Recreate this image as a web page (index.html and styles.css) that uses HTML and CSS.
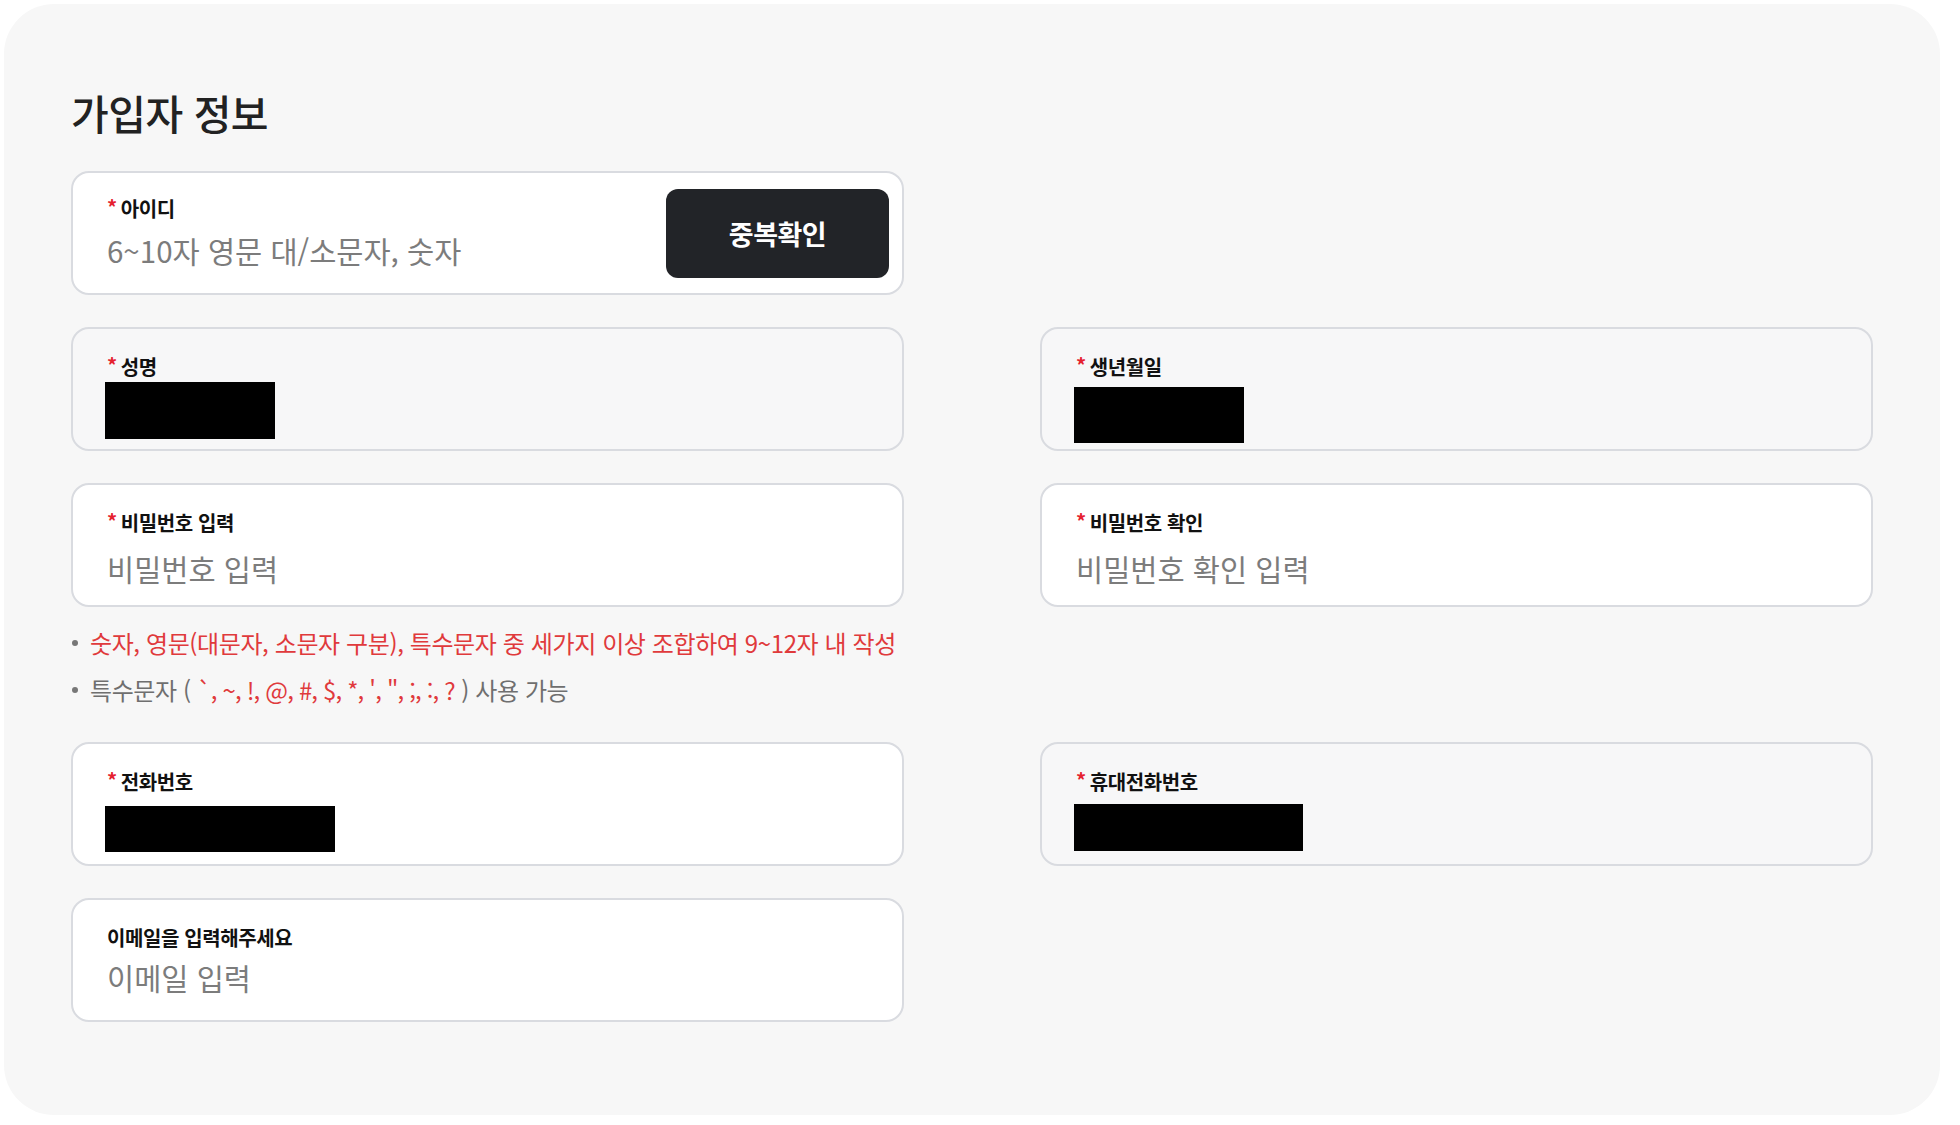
FILE: index.html
```html
<!DOCTYPE html>
<html lang="ko">
<head>
<meta charset="utf-8">
<title>가입자 정보</title>
<link rel="stylesheet" href="styles.css">
</head>
<body>
<main class="panel">
  <h1 class="title">가입자 정보</h1>
  <div class="form">
    <div class="row">
      <div class="field field-white field-id">
        <div class="field-main">
          <label class="label"><span class="req">*</span>아이디</label>
          <div class="placeholder">6~10자 영문 대/소문자, 숫자</div>
        </div>
        <button class="btn-dark" type="button">중복확인</button>
      </div>
    </div>

    <div class="row">
      <div class="field field-gray">
        <label class="label"><span class="req">*</span>성명</label>
        <div class="redact redact-name"></div>
      </div>
      <div class="field field-gray">
        <label class="label"><span class="req">*</span>생년월일</label>
        <div class="redact redact-birth"></div>
      </div>
    </div>

    <div class="group">
      <div class="row">
        <div class="field field-white">
          <label class="label"><span class="req">*</span>비밀번호 입력</label>
          <div class="placeholder placeholder-low">비밀번호 입력</div>
        </div>
        <div class="field field-white">
          <label class="label"><span class="req">*</span>비밀번호 확인</label>
          <div class="placeholder placeholder-low">비밀번호 확인 입력</div>
        </div>
      </div>
      <ul class="hints">
        <li class="hint hint-red">숫자, 영문(대문자, 소문자 구분), 특수문자 중 세가지 이상 조합하여 9~12자 내 작성</li>
        <li class="hint">특수문자 ( <span class="sym">`, ~, !, @, #, $, *, ', ", ;, :, ?</span> ) 사용 가능</li>
      </ul>
    </div>

    <div class="row">
      <div class="field field-white">
        <label class="label"><span class="req">*</span>전화번호</label>
        <div class="redact redact-tel"></div>
      </div>
      <div class="field field-gray">
        <label class="label"><span class="req">*</span>휴대전화번호</label>
        <div class="redact redact-mobile"></div>
      </div>
    </div>

    <div class="row">
      <div class="field field-white">
        <label class="label">이메일을 입력해주세요</label>
        <div class="placeholder placeholder-email">이메일 입력</div>
      </div>
    </div>
  </div>
</main>
</body>
</html>
```

FILE: styles.css
```css
* { box-sizing: border-box; }

html, body {
  margin: 0;
  padding: 0;
  background: #ffffff;
}

body {
  font-family: "Noto Sans CJK KR", "Noto Sans", sans-serif;
  color: #1d1d1f;
}

.panel {
  margin: 4px;
  width: 1936px;
  height: 1111px;
  background: #f7f7f7;
  border-radius: 50px;
  padding: 83px 0 0 67px;
}

.title {
  margin: 0 0 34px 0;
  font-size: 41px;
  line-height: 50px;
  font-weight: 500;
  color: #222222;
  letter-spacing: -0.5px;
}

.form {
  display: flex;
  flex-direction: column;
  gap: 32px;
}

.row {
  display: flex;
  gap: 136px;
}

.group {
  display: flex;
  flex-direction: column;
}

.field {
  width: 833px;
  height: 124px;
  border: 2px solid #d9dbe0;
  border-radius: 18px;
  padding: 25px 34px 0 34px;
  display: flex;
  flex-direction: column;
}

.field-white { background: #ffffff; }
.field-gray { background: #f7f7f8; }

.field-id {
  flex-direction: row;
  align-items: center;
  padding: 0 13px 0 34px;
}

.field-main {
  flex: 1;
  display: flex;
  flex-direction: column;
  padding-top: 0;
}

.label {
  display: block;
  font-size: 20px;
  line-height: 26px;
  font-weight: 700;
  color: #111111;
  letter-spacing: -0.4px;
}

.req {
  color: #e5212f;
  font-size: 20px;
  margin-right: 4px;
  position: relative;
  top: -2px;
}

.placeholder {
  margin-top: 8px;
  font-size: 29.5px;
  line-height: 40px;
  color: #7c7c7c;
  letter-spacing: 0;
}

.placeholder-low { margin-top: 12px; }
.placeholder-email { margin-top: 6px; }

.btn-dark {
  width: 223px;
  height: 89px;
  border: none;
  border-radius: 12px;
  background: #222428;
  color: #ffffff;
  font-family: "Noto Sans CJK KR", "Noto Sans", sans-serif;
  font-size: 27px;
  font-weight: 700;
  letter-spacing: -0.5px;
}

.redact { background: #000000; }
.redact-name { width: 170px; height: 57px; margin-top: 2px; margin-left: -2px; }
.redact-birth { width: 170px; height: 56px; margin-top: 7px; margin-left: -2px; }
.redact-tel { width: 230px; height: 46px; margin-top: 11px; margin-left: -2px; }
.redact-mobile { width: 229px; height: 47px; margin-top: 9px; margin-left: -2px; }

.hints {
  list-style: none;
  margin: 12px 0 0 0;
  padding: 0;
}

.hint {
  display: flex;
  align-items: center;
  font-size: 24px;
  line-height: 47px;
  color: #6f6f6f;
  letter-spacing: -0.4px;
  white-space: pre;
}

.hint:last-child { margin-bottom: -3px; }

.hint::before {
  content: "";
  width: 6px;
  height: 6px;
  border-radius: 50%;
  background: #777777;
  margin: 0 12px 0 1px;
  flex: none;
}

.hint-red { color: #e03a3c; }
.sym { color: #e03a3c; letter-spacing: -0.85px; }
```
